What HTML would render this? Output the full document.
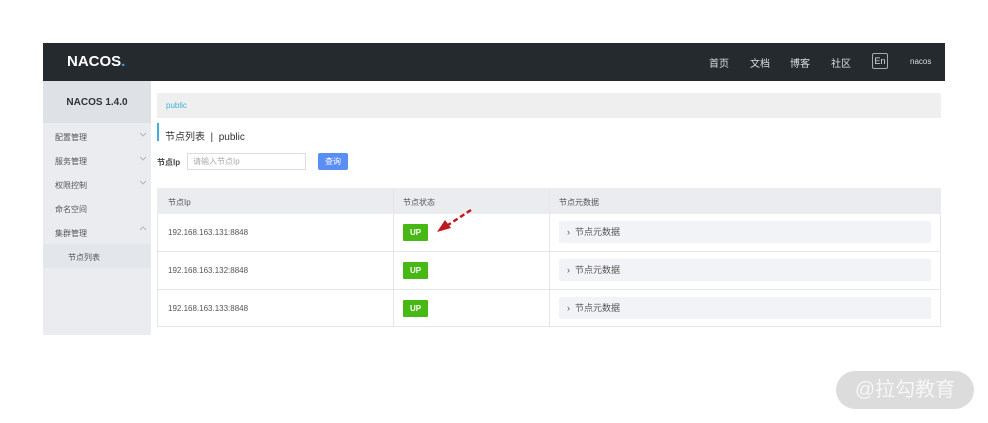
<!DOCTYPE html>
<html><head><meta charset="utf-8">
<style>
*{margin:0;padding:0;box-sizing:border-box}
body{width:988px;height:423px;background:#fff;position:relative;overflow:hidden;font-family:"Liberation Sans","Noto Sans CJK SC",sans-serif;color:#333}
.a{position:absolute}
.hdr{left:43px;top:43px;width:902px;height:38px;background:#252a2f}
.logo{left:67px;top:53px;color:#fff;font-weight:bold;font-size:15px;letter-spacing:0}
.nav{top:55px;color:#ddd;font-size:10px}
.side{left:43px;top:81px;width:108px;height:254px;background:#eaecf0}
.sidet{left:43px;top:81px;width:108px;height:42px;background:#dee1e6;font-weight:bold;font-size:10px;text-align:center;line-height:44px;color:#333}
.mi{left:55px;font-size:8px;color:#555}
.sub{left:43px;top:244px;width:108px;height:24px;background:#e3e6ea}
.td{font-size:8px;color:#555}
.up{width:25px;height:17px;background:#47b814;color:#fff;font-size:8px;font-weight:bold;text-align:center;line-height:17px;border-radius:1px}
.meta{left:559px;width:372px;height:22px;background:#f2f3f6;border-radius:2px;font-size:9px;color:#555;line-height:22px;padding-left:8px}
</style></head><body>
<div class="a hdr"></div>
<div class="a logo">NACOS<span style="color:#37a3ff">.</span></div>
<div class="a nav" style="left:709px">首页</div>
<div class="a nav" style="left:750px">文档</div>
<div class="a nav" style="left:790px">博客</div>
<div class="a nav" style="left:831px">社区</div>
<div class="a" style="left:872px;top:53px;width:16px;height:16px;border:1px solid #aaa;border-radius:2px;color:#ddd;font-size:9px;text-align:center;line-height:14px">En</div>
<div class="a nav" style="left:910px;top:57px;font-size:8px">nacos</div>

<div class="a side"></div>
<div class="a sidet">NACOS 1.4.0</div>
<div class="a mi" style="top:132px">配置管理</div>
<div class="a mi" style="top:156px">服务管理</div>
<div class="a mi" style="top:180px">权限控制</div>
<div class="a mi" style="top:204px">命名空间</div>
<div class="a mi" style="top:228px">集群管理</div>
<svg class="a" style="left:139px;top:133px" width="8" height="100"><g fill="none" stroke="#aaa" stroke-width=".8"><path d="M1 2l3 3 3-3M1 26l3 3 3-3M1 50l3 3 3-3M1 99l3-3 3 3" transform="translate(0,-2)"/></g></svg>
<div class="a sub"></div>
<div class="a mi" style="left:68px;top:252px">节点列表</div>

<div class="a" style="left:157px;top:93px;width:784px;height:25px;background:#efefef"></div>
<div class="a" style="left:166px;top:101px;font-size:8px;color:#3fb0d8">public</div>
<div class="a" style="left:157px;top:123px;width:2px;height:18px;background:#3fb0d8"></div>
<div class="a" style="left:165px;top:128px;font-size:10px;color:#333">节点列表 &nbsp;|&nbsp; public</div>
<div class="a" style="left:157px;top:157px;font-size:8px;font-weight:bold;color:#444">节点Ip</div>
<div class="a" style="left:187px;top:153px;width:119px;height:17px;border:1px solid #ddd;font-size:8px;color:#aaa;line-height:15px;padding-left:5px">请输入节点Ip</div>
<div class="a" style="left:318px;top:153px;width:30px;height:17px;background:#5b8ef5;border-radius:2px;color:#fff;font-size:8px;text-align:center;line-height:17px">查询</div>

<div class="a" style="left:157px;top:188px;width:784px;height:139px;border:1px solid #e6e6e6"></div>
<div class="a" style="left:157px;top:188px;width:784px;height:26px;background:#ebecf0"></div>
<div class="a" style="left:157px;top:251px;width:784px;height:1px;background:#e6e6e6"></div>
<div class="a" style="left:157px;top:289px;width:784px;height:1px;background:#e6e6e6"></div>
<div class="a" style="left:393px;top:188px;width:1px;height:139px;background:#e6e6e6"></div>
<div class="a" style="left:549px;top:188px;width:1px;height:139px;background:#e6e6e6"></div>
<div class="a td" style="left:168px;top:197px">节点Ip</div>
<div class="a td" style="left:403px;top:197px">节点状态</div>
<div class="a td" style="left:559px;top:197px">节点元数据</div>

<div class="a td" style="left:168px;top:228px">192.168.163.131:8848</div>
<div class="a td" style="left:168px;top:266px">192.168.163.132:8848</div>
<div class="a td" style="left:168px;top:304px">192.168.163.133:8848</div>
<div class="a up" style="left:403px;top:224px">UP</div>
<div class="a up" style="left:403px;top:262px">UP</div>
<div class="a up" style="left:403px;top:300px">UP</div>
<div class="a meta" style="top:221px">›&nbsp; 节点元数据</div>
<div class="a meta" style="top:259px">›&nbsp; 节点元数据</div>
<div class="a meta" style="top:297px">›&nbsp; 节点元数据</div>
<svg class="a" style="left:434px;top:208px" width="40" height="30"><path d="M37 2L14 17" stroke="#c0181f" stroke-width="2.5" stroke-dasharray="5 3" fill="none"/><path d="M3 24L11 12L17 20Z" fill="#c0181f"/></svg>

<div class="a" style="left:836px;top:371px;width:138px;height:38px;background:#dcdcdc;border-radius:19px;color:#f6f6f6;font-size:20px;text-align:center;line-height:38px">@拉勾教育</div>
</body></html>
